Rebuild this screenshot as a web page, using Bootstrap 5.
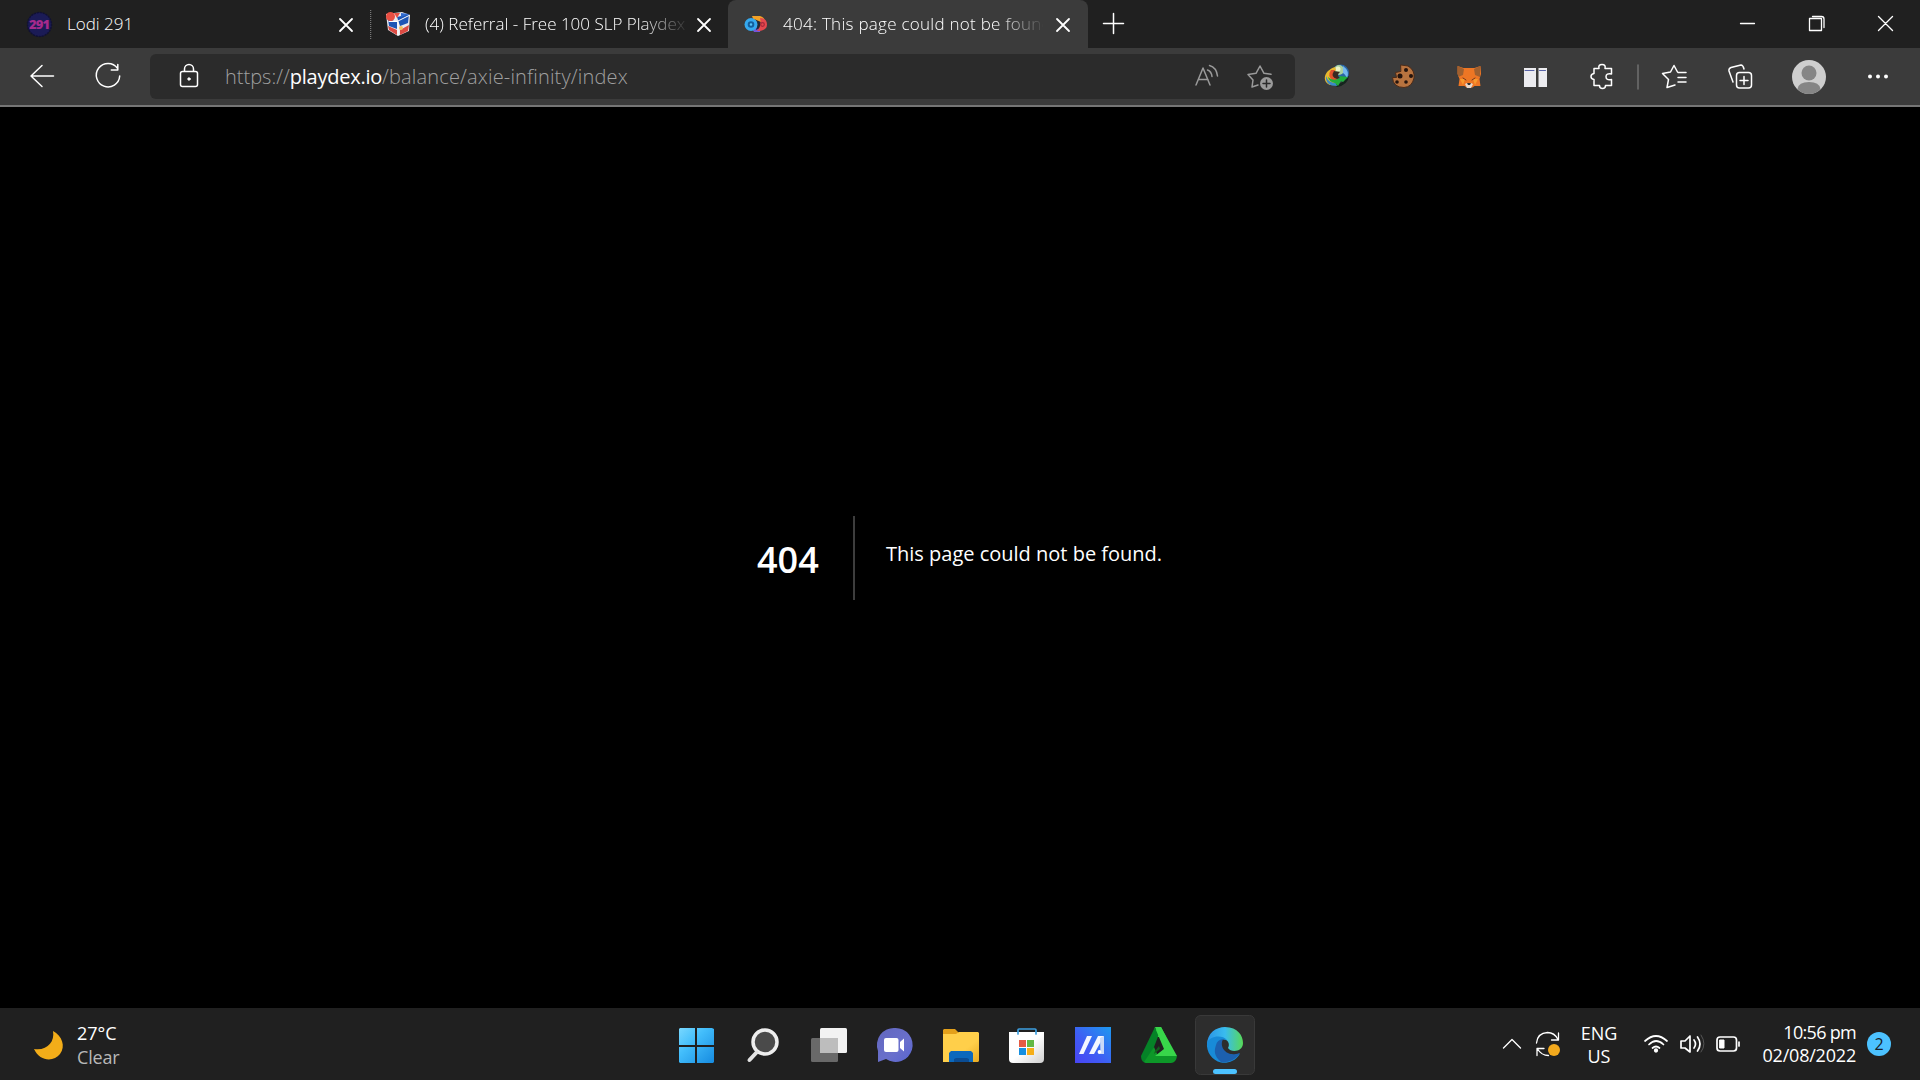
<!DOCTYPE html>
<html lang="en">
<head>
<meta charset="utf-8">
<title>404: This page could not be found</title>
<link href="https://cdn.jsdelivr.net/npm/bootstrap@5.3.0/dist/css/bootstrap.min.css" rel="stylesheet">
<style>
body{background:#000;color:#fff;font-family:"Open Sans","Noto Sans",sans-serif;width:1920px;height:1080px}
svg{display:block;flex:none;fill:none;stroke:#fff;stroke-width:1.5;stroke-linecap:round;stroke-linejoin:round}
svg.filled{stroke:none}
.tabstrip{height:48px;background:#202020}
.tab-item{height:48px;font-size:17px;font-weight:300;line-height:47px}
.tab-first{width:370px;padding-left:25px}
.tab-second{width:358px}
.tab-live{width:360px;background:#3b3b3b;border-radius:8px 8px 0 0}
.tab-live .tab-title{letter-spacing:.27px}
.tab-title{flex:none;overflow:hidden;white-space:nowrap;height:48px}
.tab-fade{-webkit-mask-image:linear-gradient(90deg,#000 82%,transparent 101%);mask-image:linear-gradient(90deg,#000 82%,transparent 101%)}
.toolstrip{height:59px;background:#3b3b3b;border-bottom:2px solid #767676}
.address{width:1145px;height:45px;background:#2b2b2b;border-radius:6px}
.url-text{width:940px;font-size:20px;font-weight:300;color:#a0a0a0;line-height:45px;white-space:nowrap}
.url-text b{font-weight:400;color:#fff;letter-spacing:-.25px}
.url-path{letter-spacing:.17px}
.code404{font-size:36px;font-weight:600;line-height:88px;height:84px;border-right:2px solid #3d3d3d;width:98px}
.msg404{font-size:20px;line-height:32px;padding:22px 0 0 31px}
.taskbar{height:72px;background:#202020}
.tray{font-size:18px;line-height:23px;white-space:nowrap;flex:none}
.weather{width:586px;padding-top:14px}
.lang{width:60px;padding-top:14px}
.clock{width:106px;padding-top:13px;letter-spacing:-.2px}
</style>
<script src="https://cdn.jsdelivr.net/npm/bootstrap@5.3.0/dist/js/bootstrap.bundle.min.js"></script>
</head>
<body class="d-flex flex-column overflow-hidden m-0">
<header class="flex-shrink-0">
  <div class="tabstrip d-flex">
    <div class="tab-item tab-first d-flex">
      <svg width="42" height="48" viewBox="25 0 42 48"><circle cx="39.500" cy="24.500" r="12" fill="#1b1b56" stroke="#111133" stroke-dasharray="1 2"/><text x="29" y="29" font-size="13" font-weight="800" fill="#a52a8c" stroke="none" textLength="21">291</text></svg>
      <span class="tab-title" style="width:265px">Lodi 291</span>
      <svg width="28" height="48" viewBox="332 0 28 48" style="stroke-width:1.800"><path d="M340 19l12 12m0-12l-12 12"/></svg>
    </div>
    <div class="tab-item tab-second d-flex">
      <svg class="filled" width="55" height="48" viewBox="370 0 55 48"><path d="M370.500 10v30" stroke="#777" stroke-dasharray="1 1" stroke-linecap="butt"/><path d="M386 14l16-2 8 3-1 16-11 5-10-6z" fill="#e8e8ee"/><path d="M397 17l12-3-1 9-8 3zM388 19l9 3v7l-8-3z" fill="#1d55b5"/><path d="M401 13l8 1-8 3z" fill="#2f6bd0"/><path d="M388 26l9 4v5l-8-5zM400 30l9-5-1 6-8 4z" fill="#dc4b43"/><path d="M394 13h6l-3 5z" fill="#e84e42"/><circle cx="390.500" cy="16.500" r="4.500" fill="#e84e42"/><circle cx="401" cy="28" r="2" fill="#f0c060"/><path d="M389 21.500l8 0 12-6M398 22v13" stroke="#fff" stroke-width="1"/></svg>
      <span class="tab-title tab-fade" style="width:262px">(4) Referral - Free 100 SLP Playdex</span>
      <svg width="28" height="48" viewBox="691 0 28 48" style="stroke-width:1.800;margin-left:4px"><path d="M698 19l12 12m0-12l-12 12"/></svg>
    </div>
    <div class="tab-item tab-live d-flex">
      <svg class="filled" width="55" height="48" viewBox="728 0 55 48"><path d="M752 16h8q7 2 4 10l-9-2z" fill="#f2a126"/><path d="M750 25l11 1-1 6h-6z" fill="#7654d8"/><path d="M754 19q5 3 2 11l4-2 1-6z" fill="#252a38"/><circle cx="751" cy="24.500" r="6.500" fill="#35a9ee"/><circle cx="751" cy="24.500" r="2.300" fill="#55c5fa" stroke="#145e9c" stroke-width="2"/><path d="M760 18q7 0 7 6.500t-10 6.500q5-5 3-13z" fill="#e5484e"/><circle cx="762.500" cy="24.500" r="1.800" stroke="#a6283a" stroke-width="1.200"/></svg>
      <span class="tab-title tab-fade" style="width:260px">404: This page could not be found</span>
      <svg width="28" height="48" viewBox="1049 0 28 48" style="stroke-width:1.800;margin-left:6px"><path d="M1057 19l12 12m0-12l-12 12"/></svg>
    </div>
    <svg width="50" height="48" viewBox="1088 0 50 48"><path d="M1103.500 23.500h20m-10-10v20"/></svg>
    <svg class="ms-auto" width="207" height="48" viewBox="1713 0 207 48"><path d="M1740.500 23.500h14M1809.500 18.500h12v12h-12zM1812.500 16.500h9q2.500 0 2.500 2.500v8.500M1878.500 16.500l14 14m0-14l-14 14" stroke-width="1.300"/></svg>
  </div>
  <div class="toolstrip d-flex align-items-start">
    <svg width="150" height="57" viewBox="0 48 150 57"><path d="M53.500 76H31m11-10.500L31 76l11 10.500M117.500 68.300A11.700 11.700 0 1 0 119.700 76M117.800 64.500v5.500h-6.500"/></svg>
    <div class="address d-flex" style="margin-top:6px">
      <svg width="75" height="45" viewBox="150 54 75 45"><rect x="180.500" y="71.500" width="17" height="15" rx="2"/><path d="M184.500 71v-2a4.500 4.500 0 0 1 9 0v2"/><circle cx="189" cy="79" r="1.200" fill="#fff" stroke-width="1"/></svg>
      <div class="url-text">https://<b>playdex.io</b><span class="url-path">/balance/axie-infinity/index</span></div>
      <svg width="130" height="45" viewBox="1165 54 130 45" style="stroke:#9a9a9a"><path d="M1196 85l7-17 7 17M1198.500 79.500h9.500M1207.500 70q4 1.500 4.500 6.500M1209.500 65.500q7 2 8 10.500"/><path d="M1258 85l-6 2 1-7-5-5.500 8-1.200 4-7.300 4 7.300 7 1"/><circle cx="1266.500" cy="83.500" r="6.500" fill="#9a9a9a" stroke="none"/><path d="M1263 83.500h7m-3.500-3.500v7" stroke="#2b2b2b"/></svg>
    </div>
    <svg width="625" height="57" viewBox="1295 48 625 57">
      <g stroke="none">
        <circle cx="1340.500" cy="73" r="8.500" fill="#2965a6"/><path d="M1330 80q9 8 15-1l4-3q-1 9-12 11z" fill="#15251d"/><circle cx="1339" cy="70" r="5" fill="#a9cf9d"/><circle cx="1338" cy="69" r="2.500" fill="#edf3c8"/><path d="M1343 66q7 5 4 12-2-4-4-5z" fill="#75b8f0"/>
        <path d="M1335 67c-12 4-13 15-5 18l6-3q-7-6 0-12z" fill="#e8b92e"/><path d="M1326 76q-1 10 11 10l-1-3q-8 0-10-7z" fill="#3a8bc5"/><path d="M1331 70q-5 7 3 11l6-1q-9-4-5-10z" fill="#e3512c"/><path d="M1334 71q-4 6 3 8l3-1q-4-3 0-6z" fill="#3a2822"/><path d="M1328 77q5 5 12 1l-1-2 9 1-5 5-2-1-3 5-3-3q-6-1-7-6z" fill="#21ae3c"/>
        <path d="M1401 65l7 1q7 4 6 12-2 9-10 9.500-11 0-11.500-10l4 0-1-5 5-1z" fill="#b8733f" stroke="#4d2c19" stroke-width="1"/><g fill="#24140e"><circle cx="1406" cy="70" r="2"/><circle cx="1411" cy="76" r="2"/><circle cx="1400" cy="76" r="2.500"/><circle cx="1397" cy="82" r="1.800"/><circle cx="1406" cy="82" r="1.800"/></g>
        <path d="M1457.500 66l6 2h11l6-2 .5 8-1.500 5 1 7h-6l-2 1.500h-6l-2-1.500h-6l1-7-2-5z" fill="#ee7624"/><path d="M1458 66l6 3-1 6-5 2zM1480 66l-6 3 1 6 5 2z" fill="#a0602f"/><path d="M1460 79h5l-2 6zM1478 79h-5l2 6z" fill="#f8992f"/><path d="M1465 84l2-1h4l2 1-2 4h-4z" fill="#e7d8cc"/><path d="M1467 83h4l-1 2h-2z" fill="#333"/><path d="M1463 78l3 2M1475 78l-3 2" stroke="#71371d" stroke-width="1"/>
        <path d="M1524 68h12v19h-12zM1538.500 68h8.500v19h-8.500z" fill="#ececf0"/><path d="M1525 70.500h9M1539.500 70.500h6" stroke="#5863a8" stroke-width="1"/>
        <circle cx="1809" cy="77" r="17" fill="#cecece"/><circle cx="1809" cy="73" r="7.500" fill="#858585"/><path d="M1797.500 89q1-7 11.500-7t11.500 7q-4 5-11.500 5t-11.500-5" fill="#858585"/>
        <g fill="#fff"><circle cx="1870" cy="76.500" r="2"/><circle cx="1878" cy="76.500" r="2"/><circle cx="1886" cy="76.500" r="2"/></g>
      </g>
      <path d="M1594 68.500h5q-1-4 3-4t3 4h6.500v5.500q-5.500-1-5.500 2.800t5.500 2.700v6h-6q0 3-3 3t-3-3h-5.500v-6q-3-.5-3-3t3-3z"/>
      <path d="M1638 65v24" stroke="#707070"/>
      <path d="M1675 85l-8 2.500 1.500-8-6-6 8-1.500 3.500-6.500 3.500 6.500M1678 72.500h8M1678 77.500h8M1678 82h8"/>
      <rect x="1736.500" y="72.500" width="15" height="15.500" rx="3"/><path d="M1744 76.500v8m-4-4h8M1733 82l-4-11q-.5-2.500 2-3.500l10-2.500q2 0 3 4"/>
    </svg>
  </div>
</header>
<main class="d-flex flex-grow-1" style="padding:409px 0 0 757px">
  <div class="code404">404</div>
  <div class="msg404">This page could not be found.</div>
</main>
<footer class="taskbar d-flex flex-shrink-0">
  <svg class="filled" width="77" height="72" viewBox="0 1008 77 72"><path d="M53 1031c9 5 13 15 7 23-6 8-20 8-26-5 13 2 21-7 19-18z" fill="#f3ad19"/></svg>
  <div class="tray weather"><div>27°C</div><div style="color:#b8b8b8;line-height:24px;letter-spacing:-.2px">Clear</div></div>
  <svg class="filled" width="600" height="72" viewBox="663 1008 600 72">
    <defs><linearGradient id="win" x2="1" y2="1"><stop stop-color="#79d8ff"/><stop offset=".4" stop-color="#42bdfb"/><stop offset="1" stop-color="#168be0"/></linearGradient><linearGradient id="chat" x2="1" y2="1"><stop stop-color="#6267be"/><stop offset=".6" stop-color="#6a70cc"/><stop offset="1" stop-color="#5764d0"/></linearGradient><linearGradient id="fold" x2="1" y2="1"><stop offset=".6" stop-color="#ffcf4a"/><stop offset="1" stop-color="#e8aa22"/></linearGradient><linearGradient id="mexc" x1="0" y1="1" x2="1" y2="0"><stop stop-color="#4945f4"/><stop offset=".4" stop-color="#405bf4"/><stop offset="1" stop-color="#1d99ef"/></linearGradient><linearGradient id="edge"><stop stop-color="#2b94e5"/><stop offset=".5" stop-color="#39bbef"/><stop offset="1" stop-color="#58d958"/></linearGradient><linearGradient id="bag" x2="1" y2="1"><stop offset=".5" stop-color="#fff"/><stop offset="1" stop-color="#cfcfcf"/></linearGradient></defs>
    <path d="M680 1028h15v17h-16v-16zM697 1028h15l2 1v16h-17zM679 1047h16v16h-15l-1-1zM697 1047h17v15l-1 1h-16z" fill="url(#win)"/>
    <circle cx="765" cy="1042" r="12" fill="#4a4a4a" stroke="#eee" stroke-width="3.500"/><path d="M756.500 1052.500l-7 7.500" stroke="#e2e2e2" stroke-width="4"/>
    <rect x="820" y="1028" width="27" height="25" rx="1.500" fill="#f2f2f2"/><rect x="811" y="1038" width="27" height="24" rx="1.500" fill="#696969"/><path d="M820 1038h18v15h-18z" fill="#bdbdbd"/>
    <path d="M895 1028a17 17 0 1 1-9 31l-8 3v-11a17 17 0 0 1 17-23" fill="url(#chat)"/><rect x="884" y="1038" width="14.500" height="14" rx="2" fill="#fff"/><path d="M900 1042l4-3.500v13l-4-3.500z" fill="#fff"/>
    <path d="M943 1030l1-1h11l4 4h19l1 1v14h-36z" fill="#e3a01b"/><path d="M943 1034h13l3-2h19l1 1v28l-1 1h-35z" fill="url(#fold)"/><path d="M949 1062v-9l2-2h20l2 2v9z" fill="#0b68bc"/><path d="M954 1062v-3l2-1h11l2 1v3z" fill="#0a4c93"/>
    <path d="M1009 1032h35v27q0 4-4 4h-27q-4 0-4-4z" fill="url(#bag)"/><path d="M1018 1034v-4q0-1 1-1h16q1 0 1 1v4" stroke="#3d9fe0" stroke-width="1.700"/><path d="M1019 1040h7v7h-7z" fill="#e55b43"/><path d="M1027 1040h7v7h-7z" fill="#63b844"/><path d="M1019 1048h7v7h-7z" fill="#168fe0"/><path d="M1027 1048h7v7h-7z" fill="#f5ae18"/>
    <path d="M1075 1027h36v36h-36z" fill="url(#mexc)"/><path d="M1087 1036h5l-8.500 18h-4.500z" fill="#f3f6ff"/><path d="M1098 1036h6l-10 18h-5z" fill="#f3f6ff"/><path d="M1100 1038l4-2v18h-3.500z" fill="#c9d9f8"/><circle cx="1099.500" cy="1052" r="1.900" fill="#fff"/>
    <path d="M1155 1027h6l5 10-13 0z" fill="#40d24a"/><path d="M1155 1027l4 7-10 26-3 3q-5-1-5-7z" fill="#058227"/><path d="M1144 1062l10-15 4 9h19q-1 7-6 7h-25z" fill="#0d9728"/><path d="M1154 1054l6-5-1-3-4 5z" fill="#145c1f"/><path d="M1157 1027h4l16 29h-22l9-7-8-19z" fill="#38d64a"/>
    <rect x="1195.500" y="1015.500" width="59" height="59" rx="5" fill="#2d2d2d" stroke="#393939" stroke-width="1"/>
    <path d="M1207 1045c0-12 9-18 18-18 13 0 18 9 18 16 0 9-12 10-15 5 2-3 1-9-6-9-8 0-15 3-15 6z" fill="url(#edge)"/><path d="M1207 1043c2-7 15-9 20-3l-4-.5c-8 6-5 16 4 18 5 1 9-1 13-4-5 9-14 10-19 9-9-2-15-11-14-19.500z" fill="#188bd8"/><path d="M1216 1045q1-5 7-6c-4 8 3 15 9 15 4 1 6-1 8-1-5 8-14 10-19 9-7-6-7-11-5-17z" fill="#1c60af"/>
    <rect x="1213" y="1069" width="24" height="5" rx="2.500" fill="#4cc2ff"/>
  </svg>
  <svg class="ms-auto" width="76" height="72" viewBox="1493 1008 76 72"><path d="M1503.500 1048l8.500-8.500 8.500 8.500M1536.500 1043q1-10 11-10.500 7 0 10.500 7M1558.500 1033v7h-7M1537 1055.500v-7h7M1537.500 1049q4 6.500 11 6.500" stroke-width="1.300"/><circle cx="1554" cy="1050" r="6" fill="#f2a91d" stroke="none"/></svg>
  <div class="tray lang text-center">ENG<br>US</div>
  <svg width="121" height="72" viewBox="1629 1008 121 72"><g stroke-width="1.700"><path d="M1645 1041q11-10 22 0M1649 1044.500q7-7 14.500 0M1652.500 1048q3.500-3 7 0"/><circle cx="1656" cy="1050.500" r="1.300" fill="#fff"/><path d="M1681 1041h4l5-5v16l-5-4h-4zM1694 1040q3 4 0 8M1697.500 1037q5 7 0 14"/><path d="M1701 1035q6 9 0 17" stroke="#555" stroke-width="1"/><rect x="1717" y="1037" width="19.500" height="14" rx="3"/><path d="M1739 1042v4"/><path d="M1720 1040h4v8h-4z" fill="#fff" stroke-width="1"/></g></svg>
  <div class="tray clock text-end"><span style="letter-spacing:-.7px">10:56 pm</span><br>02/08/2022</div>
  <svg class="filled" width="64" height="72" viewBox="1856 1008 64 72"><circle cx="1879" cy="1044" r="12" fill="#4cc2ff"/><text x="1879" y="1049.500" text-anchor="middle" font-size="16" fill="#182027">2</text></svg>
</footer>
</body>
</html>
